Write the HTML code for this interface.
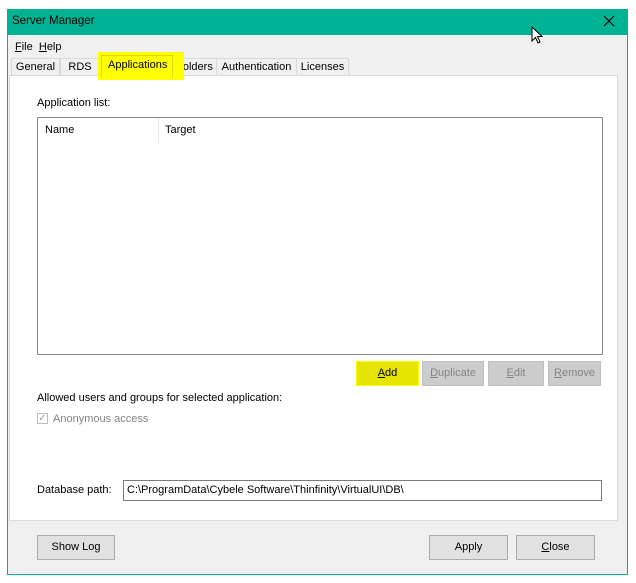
<!DOCTYPE html>
<html><head><style>
body{margin:0;width:636px;height:583px;background:#fff;position:relative;font-family:"Liberation Sans",sans-serif;font-size:11px;color:#000;overflow:hidden}
.a{position:absolute}
.btn{position:absolute;background:#e1e1e1;border:1px solid #adadad;box-sizing:border-box;text-align:center;line-height:23px}
.dis{background:#ccc;border-color:#bfbfbf;color:#838383}
.tab{position:absolute;top:58px;height:17px;border:1px solid #d9d9d9;border-bottom:none;background:#f0f0f0;line-height:16px;text-align:center;box-sizing:border-box}
</style></head><body>
<div class="a" style="left:7px;top:9px;width:621px;height:566px;border:1px solid #00b294;box-sizing:border-box;background:#f0f0f0"></div>
<div class="a" style="left:7px;top:9px;width:621px;height:26px;background:#00b294"></div>
<div class="a" style="left:12px;top:15px;font-size:11.5px">Server Manager</div>
<svg class="a" style="left:603px;top:15px" width="12" height="12"><path d="M1 1L11 11M11 1L1 11" stroke="#000" stroke-width="1.2"/></svg>
<svg class="a" style="left:531px;top:26px" width="14" height="20"><path d="M1 1V15L4.5 11.5L7 17L9 16L6.5 10.5H11Z" fill="#fff" stroke="#000" stroke-width="1"/></svg>
<div class="a" style="left:15px;top:41px"><u>F</u>ile&nbsp;&nbsp;<u>H</u>elp</div>
<div class="tab" style="left:11px;width:49px">General</div>
<div class="tab" style="left:60px;width:40px">RDS</div>
<div class="tab" style="left:172px;width:45px">Folders</div>
<div class="tab" style="left:216px;width:81px">Authentication</div>
<div class="tab" style="left:296px;width:53px">Licenses</div>
<div class="a" style="left:9px;top:75px;width:609px;height:446px;background:#fff;border:1px solid #d9d9d9;box-sizing:border-box"></div>
<div class="a" style="left:98px;top:52px;width:86px;height:28px;background:#ffff00"></div>
<div class="a" style="left:101px;top:55px;width:72px;height:22px;border:1px solid #d9d900;border-bottom:none;box-sizing:border-box"></div>
<div class="a" style="left:108px;top:59px">Applications</div>
<div class="a" style="left:37px;top:97px">Application list:</div>
<div class="a" style="left:37px;top:117px;width:566px;height:238px;border:1px solid #828790;box-sizing:border-box;background:#fff"></div>
<div class="a" style="left:158px;top:118px;width:1px;height:24px;background:#e5e5e5"></div>
<div class="a" style="left:45px;top:124px">Name</div>
<div class="a" style="left:165px;top:124px">Target</div>
<div class="btn" style="left:356px;top:361px;width:63px;height:25px;background:#e5e500;border-color:#ffff00"><u>A</u>dd</div>
<div class="btn dis" style="left:422px;top:361px;width:62px;height:25px"><u>D</u>uplicate</div>
<div class="btn dis" style="left:488px;top:361px;width:56px;height:25px"><u>E</u>dit</div>
<div class="btn dis" style="left:548px;top:361px;width:53px;height:25px"><u>R</u>emove</div>
<div class="a" style="left:37px;top:392px">Allowed users and groups for selected application:</div>
<div class="a" style="left:37px;top:413px;width:11px;height:11px;border:1px solid #bcbcbc;box-sizing:border-box;font-size:10px;line-height:9px;color:#999;text-align:center">✓</div>
<div class="a" style="left:53px;top:413px;color:#838383">Anonymous access</div>
<div class="a" style="left:37px;top:484px">Database path:</div>
<div class="a" style="left:123px;top:480px;width:479px;height:21px;border:1px solid #7a7a7a;box-sizing:border-box;background:#fff;padding-left:3px;line-height:19px">C:\ProgramData\Cybele Software\Thinfinity\VirtualUI\DB\</div>
<div class="btn" style="left:37px;top:535px;width:78px;height:25px">Show Log</div>
<div class="btn" style="left:429px;top:535px;width:79px;height:25px">Apply</div>
<div class="btn" style="left:516px;top:535px;width:79px;height:25px"><u>C</u>lose</div>
</body></html>
